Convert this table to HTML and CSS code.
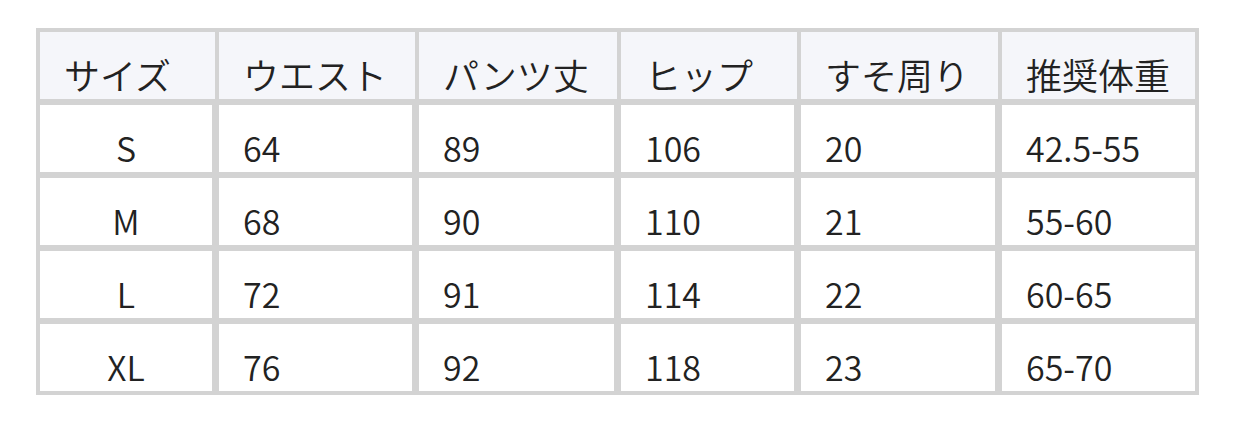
FILE: index.html
```html
<!DOCTYPE html>
<html lang="ja">
<head>
<meta charset="utf-8">
<title>サイズ表</title>
<link rel="stylesheet" href="styles.css">
</head>
<body>
<table class="size-table">
  <colgroup>
    <col class="c1"><col class="c2"><col class="c3"><col class="c4"><col class="c5"><col class="c6">
  </colgroup>
  <thead>
    <tr>
      <th>サイズ</th><th>ウエスト</th><th>パンツ丈</th><th>ヒップ</th><th>すそ周り</th><th>推奨体重</th>
    </tr>
  </thead>
  <tbody>
    <tr><td>S</td><td>64</td><td>89</td><td>106</td><td>20</td><td>42.5-55</td></tr>
    <tr><td>M</td><td>68</td><td>90</td><td>110</td><td>21</td><td>55-60</td></tr>
    <tr><td>L</td><td>72</td><td>91</td><td>114</td><td>22</td><td>60-65</td></tr>
    <tr><td>XL</td><td>76</td><td>92</td><td>118</td><td>23</td><td>65-70</td></tr>
  </tbody>
</table>
</body>
</html>
```
FILE: styles.css
```css
body {
  margin: 8px;
  background: #ffffff;
  font-family: "Noto Sans CJK JP", "Noto Sans", sans-serif;
  color: #222222;
}

.size-table {
  border-collapse: separate;
  border-spacing: 0;
  table-layout: fixed;
  width: 1163px;
  margin: 20px 0 0 28px;
  font-size: 34px;
  line-height: 35px;
}

.c1 { width: 179px; }
.c2 { width: 200px; }
.c3 { width: 202px; }
.c4 { width: 180px; }
.c5 { width: 201px; }
.c6 { width: 201px; }

.size-table th,
.size-table td {
  height: 35px;
  padding: 25px 24px 7px;
  vertical-align: top;
  text-align: left;
  white-space: nowrap;
  font-weight: 350;
  border: 0 solid #d3d3d3;
}

.size-table th {
  font-size: 36px;
  background: #f5f6fa;
  border-left-width: 4px;
  border-top-width: 4px;
  border-bottom-width: 3px;
}

.size-table th:last-child {
  border-right-width: 4px;
}

.size-table td {
  border-left-width: 4px;
  border-right-width: 3px;
  border-top-width: 3px;
  border-bottom-width: 3px;
}

.size-table td:first-child {
  text-align: center;
}

.size-table td:last-child {
  border-right-width: 4px;
}

.size-table tbody tr:last-child td {
  border-bottom-width: 4px;
}
```
